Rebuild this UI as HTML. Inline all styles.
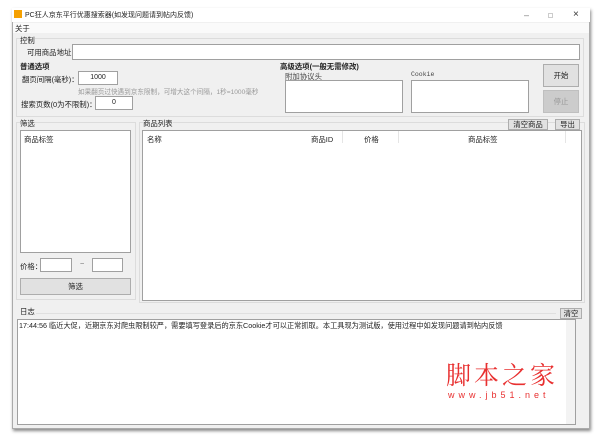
<!DOCTYPE html>
<html><head><meta charset="utf-8"><style>
*{margin:0;padding:0;box-sizing:border-box}
body{width:600px;height:439px;background:#fff;position:relative;overflow:hidden;font-family:"Liberation Sans","Noto Sans CJK SC",sans-serif;font-size:7.4px;color:#222}
.a{position:absolute;white-space:nowrap}
.win{position:absolute;left:12px;top:8px;width:578px;height:421px;background:#f0f0f0;box-shadow:1px 2px 3px #888;border:1px solid #aaa}
.in{position:absolute;background:#fff;border:1px solid #a0a0a0}
.btn{position:absolute;background:#e1e1e1;border:1px solid #adadad;text-align:center;font-size:7.4px}
.grp{position:absolute;border:1px solid #dcdcdc}
</style></head><body>
<div class="win"></div>
<div class="a" style="left:12px;top:8px;width:578px;height:14px;background:#fff"></div>
<div class="a" style="left:14px;top:10px;width:8px;height:8px;background:#f5a000"></div>
<div class="a" style="left:25px;top:10px;font-size:7px">PC狂人京东平行优惠搜索器(如发现问题请到帖内反馈)</div>
<div class="a" style="left:524px;top:10px;font-size:9px;color:#777">–</div>
<div class="a" style="left:548px;top:13px;width:5px;height:5px;border:1px solid #ccc"></div>
<div class="a" style="left:573px;top:9px;font-size:10px;color:#333">×</div>
<div class="a" style="left:13px;top:23px;width:576px;height:10px;background:#fafafa"></div>
<div class="a" style="left:15px;top:23px">关于</div>
<div class="grp" style="left:16px;top:38px;width:568px;height:79px"></div>
<div class="a" style="left:20px;top:35px;background:#f0f0f0">控制</div>
<div class="a" style="left:27px;top:47px">可用商品地址：</div>
<div class="in" style="left:72px;top:44px;width:508px;height:16px"></div>
<div class="a" style="left:20px;top:61px;font-weight:bold">普通选项</div>
<div class="a" style="left:22px;top:74px">翻页间隔(毫秒)：</div>
<div class="in" style="left:78px;top:71px;width:40px;height:14px;font-size:7px;text-align:center;line-height:12px">1000</div>
<div class="a" style="left:78px;top:86px;color:#999;font-size:6.6px">如果翻页过快遇到京东限制，可增大这个间隔，1秒=1000毫秒</div>
<div class="a" style="left:21px;top:99px">搜索页数(0为不限制)：</div>
<div class="in" style="left:95px;top:96px;width:38px;height:14px;font-size:7px;text-align:center;line-height:12px">0</div>
<div class="a" style="left:280px;top:61px;font-weight:bold">高级选项(一般无需修改)</div>
<div class="a" style="left:285px;top:71px;color:#444">附加协议头</div>
<div class="in" style="left:285px;top:80px;width:118px;height:33px"></div>
<div class="a" style="left:411px;top:71px;color:#444;font-size:6.5px;font-family:'Liberation Mono',monospace">Cookie</div>
<div class="in" style="left:411px;top:80px;width:118px;height:33px"></div>
<div class="btn" style="left:543px;top:64px;width:36px;height:23px;line-height:21px">开始</div>
<div class="btn" style="left:543px;top:90px;width:36px;height:23px;line-height:21px;background:#ccc;border-color:#bfbfbf;color:#999">停止</div>
<div class="grp" style="left:16px;top:122px;width:120px;height:178px"></div>
<div class="a" style="left:20px;top:118px;background:#f0f0f0">筛选</div>
<div class="in" style="left:20px;top:130px;width:111px;height:123px"></div>
<div class="a" style="left:24px;top:134px">商品标签</div>
<div class="a" style="left:20px;top:261px">价格：</div>
<div class="in" style="left:40px;top:258px;width:32px;height:14px"></div>
<div class="a" style="left:80px;top:259px;color:#666">~</div>
<div class="in" style="left:92px;top:258px;width:31px;height:14px"></div>
<div class="btn" style="left:20px;top:278px;width:111px;height:17px;line-height:15px">筛选</div>
<div class="grp" style="left:139px;top:122px;width:446px;height:181px"></div>
<div class="a" style="left:143px;top:118px;background:#f0f0f0">商品列表</div>
<div class="btn" style="left:508px;top:119px;width:40px;height:11px;line-height:9px">清空商品</div>
<div class="btn" style="left:555px;top:119px;width:25px;height:11px;line-height:9px">导出</div>
<div class="in" style="left:142px;top:130px;width:440px;height:171px"></div>
<div class="a" style="left:147px;top:134px">名称</div>
<div class="a" style="left:311px;top:134px">商品ID</div>
<div class="a" style="left:364px;top:134px">价格</div>
<div class="a" style="left:468px;top:134px">商品标签</div>
<div class="a" style="left:342px;top:131px;width:1px;height:12px;background:#e5e5e5"></div>
<div class="a" style="left:398px;top:131px;width:1px;height:12px;background:#e5e5e5"></div>
<div class="a" style="left:565px;top:131px;width:1px;height:12px;background:#e5e5e5"></div>
<div class="a" style="left:20px;top:306px">日志</div>
<div class="a" style="left:36px;top:313px;width:520px;height:1px;background:#e0e0e0"></div>
<div class="btn" style="left:560px;top:308px;width:22px;height:11px;line-height:9px">清空</div>
<div class="in" style="left:17px;top:319px;width:559px;height:106px"></div>
<div class="a" style="left:566px;top:320px;width:9px;height:104px;background:#f3f3f3"></div>
<div class="a" style="left:19px;top:321px;font-size:7.2px">17:44:56 临近大促，近期京东对爬虫限制较严，需要填写登录后的京东Cookie才可以正常抓取。本工具现为测试版，使用过程中如发现问题请到帖内反馈</div>
<div class="a" style="left:446px;top:356px;font-size:25px;color:#e83030;letter-spacing:3px;font-family:'Noto Serif CJK SC',serif">脚本之家</div>
<div class="a" style="left:448px;top:390px;font-size:9px;color:#e83030;letter-spacing:4px">www.jb51.net</div>
</body></html>
